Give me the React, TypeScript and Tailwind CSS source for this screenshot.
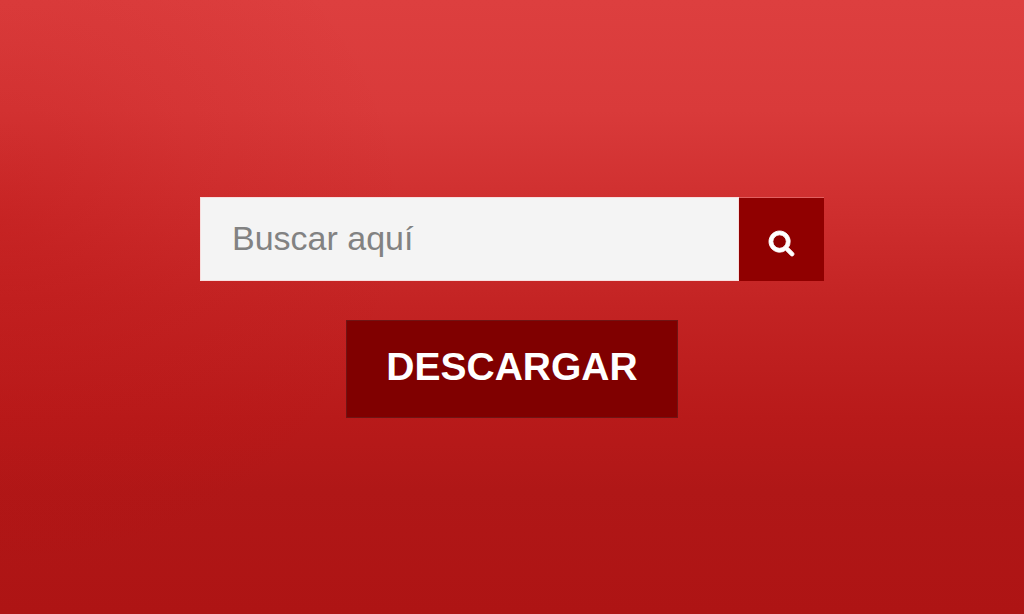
import { useState } from "react";
import type { FormEvent } from "react";

function SearchIcon() {
  return (
    <svg
      viewBox="64 128 1664 1664"
      className="size-[25px] overflow-visible fill-white stroke-white stroke-[60]"
      aria-hidden="true"
    >
      <path d="M1216 832q0-185-131.5-316.5t-316.5-131.5-316.5 131.5-131.5 316.5 131.5 316.5 316.5 131.5 316.5-131.5 131.5-316.5zm512 832q0 52-38 90t-90 38q-54 0-90-38l-343-342q-179 124-399 124-143 0-273.5-55.5t-225-150-150-225-55.5-273.5 55.5-273.5 150-225 225-150 273.5-55.5 273.5 55.5 225 150 150 225 55.5 273.5q0 220-124 399l343 343q37 37 37 90z" />
    </svg>
  );
}

function SearchBar() {
  const [query, setQuery] = useState("");
  const onSubmit = (event: FormEvent) => event.preventDefault();

  return (
    <form role="search" onSubmit={onSubmit} className="flex h-[84px] w-full max-w-[624px]">
      <input
        type="text"
        aria-label="Buscar aquí"
        placeholder="Buscar aquí"
        value={query}
        onChange={(event) => setQuery(event.target.value)}
        className="min-w-0 flex-1 border border-[#f8dede] bg-[#f4f4f4] px-[31px] text-[34px] text-[#444444] outline-none placeholder:text-[#828282]"
      />
      <button
        type="submit"
        aria-label="Buscar"
        className="flex w-[85px] shrink-0 items-center justify-center border-t border-[#e06060] bg-[#900000] pt-2"
      >
        <SearchIcon />
      </button>
    </form>
  );
}

export default function App() {
  return (
    <main className="flex min-h-screen flex-col items-center justify-center gap-[39px] bg-[radial-gradient(ellipse_40%_60%_at_0%_36%,#b8101055,#b8101022_50%,#b8101000),linear-gradient(180deg,#dd3f3f_0%,#d93a3a_18%,#d03030_32%,#c32323_50%,#b81a1a_68%,#b01717_80%,#ae1414_100%)] px-4 font-['Liberation_Sans',Arial,sans-serif]">
      <SearchBar />
      <button
        type="button"
        className="h-[98px] border border-[#701414] bg-[#800000] px-[39px] pb-0.5 text-[39px] font-bold text-white"
      >
        DESCARGAR
      </button>
    </main>
  );
}
